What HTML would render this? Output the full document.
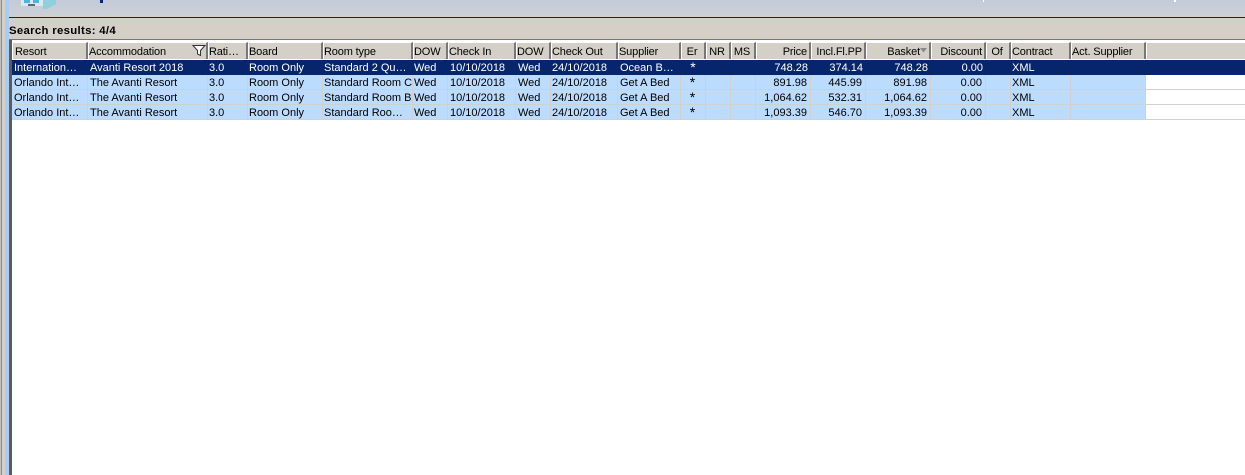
<!DOCTYPE html>
<html><head><meta charset="utf-8"><style>
html,body{margin:0;padding:0;background:#fff}
#p{position:relative;width:1245px;height:475px;overflow:hidden;background:#fff;font:11px "Liberation Sans",sans-serif;color:#000}
#p div{position:absolute;box-sizing:border-box}
.h{top:42px;height:17px;background:#d4d0c8;border-top:1px solid #fff;border-left:1px solid #fff;border-right:2px solid #777;line-height:18px;padding:0 2px 0 0;white-space:nowrap;overflow:hidden;letter-spacing:-.15px}
.h[style*="left:12px"]{padding-left:2px}
.c{height:15px;line-height:16px;padding:0 2px 0 1px;white-space:nowrap;overflow:hidden;background:#bbdcff;border-right:1px solid #d0d0d0;border-bottom:1px solid #d0d0d0}
.c[style*="left:12px"],.c[style*="left:88px"],.c[style*="left:448px"],.c[style*="left:516px"],.c[style*="left:618px"]{padding-left:2px}
.s{background:#06256c;color:#fff;border:0}
.r{text-align:right}
.c.r{padding-right:3px}
.e{font-size:14px;line-height:15px}
</style></head><body><div id="p">
<div style="left:0;top:0;width:1245px;height:40px;background:#d4d0c8"></div>
<div style="left:0;top:0;width:1245px;height:16px;background:linear-gradient(#c3cad9,#cdd0d6)"></div>
<div style="left:8px;top:17px;width:1237px;height:1px;background:#06256c"></div>
<div style="left:8px;top:39px;width:1237px;height:1px;background:#777"></div>
<div style="left:0;top:0;width:2px;height:475px;background:#c0c0c0"></div>
<div style="left:1px;top:0;width:1px;height:475px;background:#8c8c8c"></div>
<div style="left:2px;top:0;width:3px;height:475px;background:#d4d0c8"></div>
<div style="left:5px;top:0;width:4px;height:475px;background:#a9cdf2"></div>
<div style="left:9px;top:40px;width:3px;height:435px;background:#5c5c5c"></div>
<svg style="position:absolute;left:21px;top:0" width="36" height="9" viewBox="0 0 36 9"><rect width="22" height="6" fill="#dce6ee"/><rect x="3" y="0" width="6" height="3" fill="#4cb4de"/><rect x="12" y="0" width="6" height="3" fill="#4cb4de"/><rect x="7" y="4" width="7" height="2" fill="#5b6b7b"/><path d="M22 0h13v4l-9 5h-4z" fill="#8fd0dc"/></svg>
<div style="left:100px;top:0;width:3px;height:3px;background:#06256c"></div>
<div style="left:983px;top:0;width:1px;height:2px;background:#fff"></div>
<div style="left:1174px;top:0;width:2px;height:2px;background:#fff"></div>
<div style="left:9px;top:24px;font-weight:bold;font-size:11.4px;line-height:14px;letter-spacing:.3px">Search results: 4/4</div>
<div style="left:12px;top:40px;width:1233px;height:2px;background:#fff"></div>

<div class="h" style="left:12px;width:76px">Resort</div>
<div class="h" style="left:88px;width:120px">Accommodation</div>
<svg style="position:absolute;left:192px;top:45px" width="14" height="11" viewBox="0 0 14 11"><path d="M1 .5H13L8.500 5.500V10.500L5.500 9V5.500Z" fill="#fff" stroke="#333" stroke-width="1"/></svg>
<div class="h" style="left:208px;width:40px">Rati…</div>
<div class="h" style="left:248px;width:75px">Board</div>
<div class="h" style="left:323px;width:90px">Room type</div>
<div class="h" style="left:413px;width:35px">DOW</div>
<div class="h" style="left:448px;width:68px">Check In</div>
<div class="h" style="left:516px;width:35px">DOW</div>
<div class="h" style="left:551px;width:67px">Check Out</div>
<div class="h" style="left:618px;width:63px">Supplier</div>
<div class="h" style="left:681px;width:25px;text-align:center">Er</div>
<div class="h" style="left:706px;width:25px;text-align:center">NR</div>
<div class="h" style="left:731px;width:25px;text-align:center">MS</div>
<div class="h r" style="left:756px;width:55px">Price</div>
<div class="h r" style="left:811px;width:55px">Incl.Fl.PP</div>
<div class="h r" style="left:866px;width:65px;padding-right:9px">Basket</div>
<svg style="position:absolute;left:920px;top:48px" width="8" height="5"><path d="M0 0H7L3.500 4.500Z" fill="#888"/></svg>
<div class="h r" style="left:931px;width:55px">Discount</div>
<div class="h" style="left:986px;width:25px;text-align:center">Of</div>
<div class="h" style="left:1011px;width:60px">Contract</div>
<div class="h" style="left:1071px;width:75px">Act. Supplier</div>
<div class="h" style="left:1146px;width:99px;border-right:0"></div>

<div class="c s" style="left:12px;top:60px;width:1233px"></div>
<div class="c s" style="left:12px;top:60px;width:76px;background:none">Internation…</div>
<div class="c s" style="left:88px;top:60px;width:120px;background:none">Avanti Resort 2018</div>
<div class="c s" style="left:208px;top:60px;width:40px;background:none">3.0</div>
<div class="c s" style="left:248px;top:60px;width:75px;background:none">Room Only</div>
<div class="c s" style="left:323px;top:60px;width:90px;background:none">Standard 2 Qu…</div>
<div class="c s" style="left:413px;top:60px;width:35px;background:none">Wed</div>
<div class="c s" style="left:448px;top:60px;width:68px;background:none">10/10/2018</div>
<div class="c s" style="left:516px;top:60px;width:35px;background:none">Wed</div>
<div class="c s" style="left:551px;top:60px;width:67px;background:none">24/10/2018</div>
<div class="c s" style="left:618px;top:60px;width:63px;background:none">Ocean B…</div>
<div class="c s e" style="left:681px;top:60px;width:25px;background:none;text-align:center">*</div>
<div class="c s r" style="left:756px;top:60px;width:55px;background:none">748.28</div>
<div class="c s r" style="left:811px;top:60px;width:55px;background:none">374.14</div>
<div class="c s r" style="left:866px;top:60px;width:65px;background:none">748.28</div>
<div class="c s r" style="left:931px;top:60px;width:55px;background:none">0.00</div>
<div class="c s" style="left:1011px;top:60px;width:60px;background:none">XML</div>

<div class="c" style="left:12px;top:75px;width:76px">Orlando Int…</div>
<div class="c" style="left:88px;top:75px;width:120px">The Avanti Resort</div>
<div class="c" style="left:208px;top:75px;width:40px">3.0</div>
<div class="c" style="left:248px;top:75px;width:75px">Room Only</div>
<div class="c" style="left:323px;top:75px;width:90px">Standard Room C</div>
<div class="c" style="left:413px;top:75px;width:35px">Wed</div>
<div class="c" style="left:448px;top:75px;width:68px">10/10/2018</div>
<div class="c" style="left:516px;top:75px;width:35px">Wed</div>
<div class="c" style="left:551px;top:75px;width:67px">24/10/2018</div>
<div class="c" style="left:618px;top:75px;width:63px">Get A Bed</div>
<div class="c e" style="left:681px;top:75px;width:25px;text-align:center">*</div>
<div class="c" style="left:706px;top:75px;width:25px"></div>
<div class="c" style="left:731px;top:75px;width:25px"></div>
<div class="c r" style="left:756px;top:75px;width:55px">891.98</div>
<div class="c r" style="left:811px;top:75px;width:55px">445.99</div>
<div class="c r" style="left:866px;top:75px;width:65px">891.98</div>
<div class="c r" style="left:931px;top:75px;width:55px">0.00</div>
<div class="c" style="left:986px;top:75px;width:25px"></div>
<div class="c" style="left:1011px;top:75px;width:60px">XML</div>
<div class="c" style="left:1071px;top:75px;width:75px"></div>
<div class="c" style="left:1146px;top:75px;width:99px;background:#fff;border-right:0"></div>

<div class="c" style="left:12px;top:90px;width:76px">Orlando Int…</div>
<div class="c" style="left:88px;top:90px;width:120px">The Avanti Resort</div>
<div class="c" style="left:208px;top:90px;width:40px">3.0</div>
<div class="c" style="left:248px;top:90px;width:75px">Room Only</div>
<div class="c" style="left:323px;top:90px;width:90px">Standard Room B</div>
<div class="c" style="left:413px;top:90px;width:35px">Wed</div>
<div class="c" style="left:448px;top:90px;width:68px">10/10/2018</div>
<div class="c" style="left:516px;top:90px;width:35px">Wed</div>
<div class="c" style="left:551px;top:90px;width:67px">24/10/2018</div>
<div class="c" style="left:618px;top:90px;width:63px">Get A Bed</div>
<div class="c e" style="left:681px;top:90px;width:25px;text-align:center">*</div>
<div class="c" style="left:706px;top:90px;width:25px"></div>
<div class="c" style="left:731px;top:90px;width:25px"></div>
<div class="c r" style="left:756px;top:90px;width:55px">1,064.62</div>
<div class="c r" style="left:811px;top:90px;width:55px">532.31</div>
<div class="c r" style="left:866px;top:90px;width:65px">1,064.62</div>
<div class="c r" style="left:931px;top:90px;width:55px">0.00</div>
<div class="c" style="left:986px;top:90px;width:25px"></div>
<div class="c" style="left:1011px;top:90px;width:60px">XML</div>
<div class="c" style="left:1071px;top:90px;width:75px"></div>
<div class="c" style="left:1146px;top:90px;width:99px;background:#fff;border-right:0"></div>

<div class="c" style="left:12px;top:105px;width:76px">Orlando Int…</div>
<div class="c" style="left:88px;top:105px;width:120px">The Avanti Resort</div>
<div class="c" style="left:208px;top:105px;width:40px">3.0</div>
<div class="c" style="left:248px;top:105px;width:75px">Room Only</div>
<div class="c" style="left:323px;top:105px;width:90px">Standard Roo…</div>
<div class="c" style="left:413px;top:105px;width:35px">Wed</div>
<div class="c" style="left:448px;top:105px;width:68px">10/10/2018</div>
<div class="c" style="left:516px;top:105px;width:35px">Wed</div>
<div class="c" style="left:551px;top:105px;width:67px">24/10/2018</div>
<div class="c" style="left:618px;top:105px;width:63px">Get A Bed</div>
<div class="c e" style="left:681px;top:105px;width:25px;text-align:center">*</div>
<div class="c" style="left:706px;top:105px;width:25px"></div>
<div class="c" style="left:731px;top:105px;width:25px"></div>
<div class="c r" style="left:756px;top:105px;width:55px">1,093.39</div>
<div class="c r" style="left:811px;top:105px;width:55px">546.70</div>
<div class="c r" style="left:866px;top:105px;width:65px">1,093.39</div>
<div class="c r" style="left:931px;top:105px;width:55px">0.00</div>
<div class="c" style="left:986px;top:105px;width:25px"></div>
<div class="c" style="left:1011px;top:105px;width:60px">XML</div>
<div class="c" style="left:1071px;top:105px;width:75px"></div>
<div class="c" style="left:1146px;top:105px;width:99px;background:#fff;border-right:0"></div>
</div></body></html>
